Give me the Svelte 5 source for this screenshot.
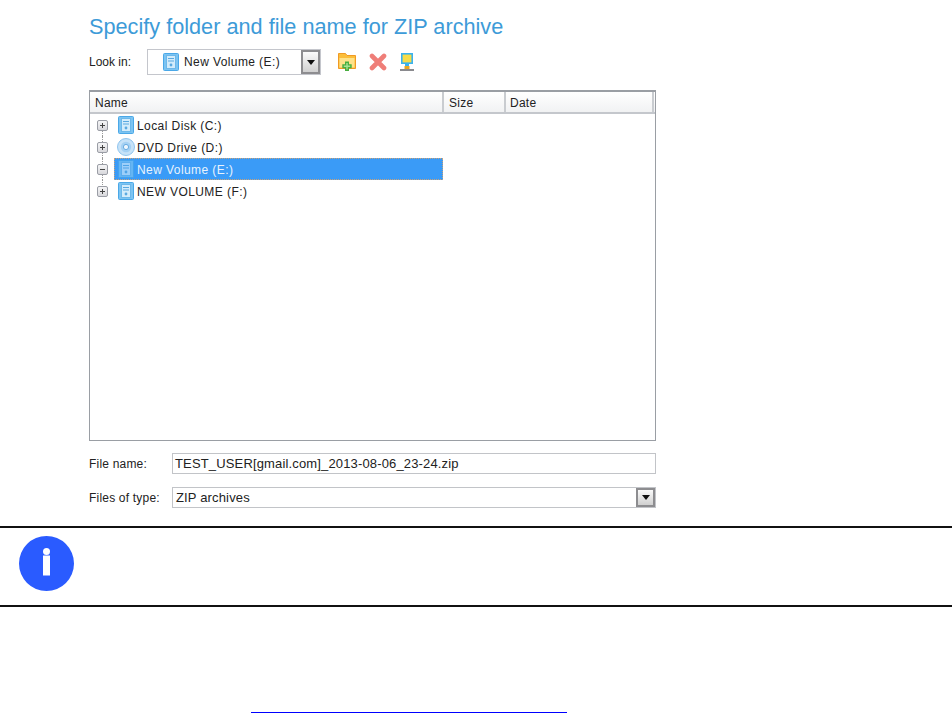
<script lang="ts">
	const drives = [
		{ label: 'Local Disk (C:)', kind: 'disk', open: false, selected: false },
		{ label: 'DVD Drive (D:)', kind: 'dvd', open: false, selected: false },
		{ label: 'New Volume (E:)', kind: 'disk', open: true, selected: true },
		{ label: 'NEW VOLUME (F:)', kind: 'disk', open: false, selected: false }
	];
</script>

{#snippet diskIcon()}
	<svg class="drive-icon" viewBox="0 0 16 18" aria-hidden="true">
		<rect x="0.5" y="0.5" width="15" height="17" rx="1" fill="#7cc4f2" stroke="#4aa8e8" />
		<rect x="3.5" y="2.5" width="9" height="13" fill="#d3ecfb" stroke="#6db8ea" />
		<path d="M5 5.5h6M5 8h6" stroke="#5aa9e0" />
		<circle cx="8" cy="12" r="1.4" fill="#5aa9e0" />
	</svg>
{/snippet}

{#snippet dvdIcon()}
	<svg class="drive-icon dvd" viewBox="0 0 18 18" aria-hidden="true">
		<circle cx="9" cy="9" r="8.5" fill="#c6e2f8" stroke="#8fc4ee" />
		<circle cx="9" cy="9" r="5.2" fill="#a5d1f3" />
		<circle cx="9" cy="9" r="2.6" fill="#eef7fe" stroke="#68abe2" />
	</svg>
{/snippet}

{#snippet comboArrow()}
	<span class="combo-arrow"><i></i></span>
{/snippet}

<main class="page">
	<section class="dialog">
		<h2 class="title">Specify folder and file name for ZIP archive</h2>

		<div class="look-row">
			<span class="look-label">Look in:</span>
			<div class="look-combo">
				<span class="look-value">
					{@render diskIcon()}
					New Volume (E:)
				</span>
				{@render comboArrow()}
			</div>
			<div class="tools">
				<svg viewBox="0 0 20 18" width="20" height="18" aria-hidden="true">
					<path d="M1.5 0.5h7l1.5 2h8.5v13h-17z" fill="#fbbe3a" stroke="#f09a24" />
					<path d="M2.5 5h15v9.5h-15z" fill="#fee28a" />
					<path d="M10 8.5v9.5M5.3 13.2h9.4" stroke="#49ad3f" stroke-width="4" />
					<path d="M10 10v6.4M6.8 13.2h6.4" stroke="#a6e394" stroke-width="1.4" />
				</svg>
				<svg viewBox="0 0 18 18" width="18" height="18" aria-hidden="true">
					<path d="M3 3l12 12M15 3L3 15" stroke="#ef7e78" stroke-width="4.6" stroke-linecap="round" />
				</svg>
				<svg viewBox="0 0 16 20" width="16" height="20" aria-hidden="true">
					<rect x="2.8" y="1.8" width="10.4" height="9.4" fill="#f6dc48" stroke="#3ab2ee" stroke-width="1.6" />
					<path d="M6 12h4v2H6z" fill="#3ab2ee" />
					<rect x="5.5" y="14" width="5" height="3" fill="#e9a51f" />
					<path d="M1 18h14" stroke="#8a8a8e" stroke-width="2" />
				</svg>
			</div>
		</div>

		<div class="tree-view">
			<div class="columns">
				<span class="col name">Name</span>
				<span class="col size">Size</span>
				<span class="col date">Date</span>
			</div>
			<ul class="tree">
				{#each drives as drive, i}
					<li class="node">
						<span class="guide" class:first={i === 0} class:last={i === drives.length - 1}></span>
						<span class="toggle" class:open={drive.open}></span>
						<span class="item-icon">
							{#if drive.kind === 'dvd'}
								{@render dvdIcon()}
							{:else}
								{@render diskIcon()}
							{/if}
						</span>
						<span class="label">{drive.label}</span>
						{#if drive.selected}
							<span class="selection">
								<span class="selection-icon">{@render diskIcon()}</span>
								<span class="selection-label">{drive.label}</span>
							</span>
						{/if}
					</li>
				{/each}
			</ul>
		</div>

		<div class="field-row name-row">
			<span class="field-label">File name:</span>
			<div class="field">TEST_USER[gmail.com]_2013-08-06_23-24.zip</div>
		</div>
		<div class="field-row type-row">
			<span class="field-label">Files of type:</span>
			<div class="field combo">
				<span class="type-value">ZIP archives</span>
				{@render comboArrow()}
			</div>
		</div>
	</section>

	<aside class="note">
		<svg class="info" viewBox="0 0 55 55" width="55" height="55" aria-hidden="true">
			<circle cx="27.5" cy="27.5" r="27.5" fill="#2a5bff" />
			<circle cx="27.5" cy="15.5" r="3.5" fill="#fff" />
			<rect x="24" y="19.5" width="7" height="20" fill="#fff" />
		</svg>
	</aside>

	<div class="link-row"><a class="link" href="#top" aria-label="link"></a></div>
</main>

<style>
	:global(body) {
		background: #fff;
	}

	.page {
		width: 952px;
		height: 713px;
		overflow: hidden;
		font-family: 'Liberation Sans', Arial, sans-serif;
		color: #222;
	}

	.dialog {
		width: 567px;
		margin-left: 89px;
		padding-top: 15px;
		font-size: 12px;
	}

	.title {
		margin: 0;
		font-size: 21.7px;
		line-height: 24px;
		font-weight: 400;
		color: #3d9bd8;
		white-space: nowrap;
	}

	.look-row {
		display: flex;
		align-items: center;
		height: 28px;
		margin-top: 9px;
	}

	.look-label {
		width: 58px;
	}

	.look-combo {
		display: flex;
		justify-content: space-between;
		width: 174px;
		height: 26px;
		box-sizing: border-box;
		border: 1px solid #c4c6cc;
	}

	.look-value {
		display: flex;
		align-items: center;
		gap: 5px;
		padding-left: 15px;
		letter-spacing: 0.4px;
	}

	.look-value .drive-icon {
		width: 16px;
		height: 18px;
	}

	.combo-arrow {
		display: flex;
		align-items: center;
		justify-content: center;
		width: 19px;
		box-sizing: border-box;
		border: 2px solid #8d8d90;
		background: linear-gradient(#fbfbfb, #d0d0d0);
	}

	.combo-arrow i {
		width: 0;
		height: 0;
		border: 4px solid transparent;
		border-top: 5px solid #111;
		border-bottom: 0;
	}

	.tools {
		display: flex;
		align-items: center;
		gap: 12px;
		margin-left: 16px;
	}

	.tools svg {
		filter: blur(0.3px);
	}

	.tree-view {
		width: 567px;
		height: 351px;
		margin-top: 14px;
		box-sizing: border-box;
		border: 1px solid #9a9ea4;
		border-top: 2px solid #9a9ea4;
	}

	.columns {
		display: grid;
		grid-template-columns: 354px 62px 148px;
		height: 22px;
		border-bottom: 2px solid #c4c7cc;
		background: linear-gradient(#fff, #f1f2f3);
		box-sizing: border-box;
		letter-spacing: 0.25px;
	}

	.col {
		display: flex;
		align-items: center;
		padding-left: 5px;
		padding-top: 1px;
		border-right: 2px solid #c9ccd0;
	}

	.col.date {
		padding-left: 4px;
	}

	.tree {
		margin: 0;
		padding: 0;
		list-style: none;
	}

	.node {
		position: relative;
		display: flex;
		align-items: center;
		height: 22px;
		padding-left: 7px;
	}

	.guide {
		position: absolute;
		left: 12px;
		top: 0;
		bottom: 0;
		border-left: 1px dotted #9a9a9a;
	}

	.guide.first {
		top: 11px;
	}

	.guide.last {
		bottom: 11px;
	}

	.toggle {
		position: relative;
		width: 9px;
		height: 9px;
		border: 1px solid #9a9da5;
		border-radius: 2px;
		background: linear-gradient(#f6f6f7, #d8d8dc);
	}

	.toggle::before,
	.toggle:not(.open)::after {
		content: '';
		position: absolute;
		background: #444;
	}

	.toggle::before {
		left: 2px;
		right: 2px;
		top: 4px;
		height: 1px;
	}

	.toggle:not(.open)::after {
		top: 2px;
		bottom: 2px;
		left: 4px;
		width: 1px;
	}

	.item-icon {
		display: flex;
		justify-content: center;
		width: 20px;
		margin-left: 8px;
	}

	.drive-icon {
		width: 16px;
		height: 18px;
		display: block;
	}

	.drive-icon.dvd {
		width: 18px;
	}

	.label {
		margin-left: 1px;
		padding-top: 1px;
		white-space: nowrap;
		letter-spacing: 0.42px;
	}

	.selection {
		position: absolute;
		left: 24px;
		top: 0;
		width: 329px;
		height: 22px;
		box-sizing: border-box;
		display: flex;
		align-items: center;
		background: #3a9bf7;
		border: 1px dotted #c9a27a;
		color: #e8f3fd;
		padding-left: 3px;
	}

	.selection-icon {
		opacity: 0.65;
	}

	.selection-label {
		margin-left: 3px;
		padding-top: 1px;
		white-space: nowrap;
		letter-spacing: 0.42px;
	}

	.field-row {
		display: flex;
		align-items: center;
	}

	.name-row {
		margin-top: 12px;
	}

	.type-row {
		margin-top: 13px;
	}

	.field-label {
		width: 83px;
		letter-spacing: 0.2px;
	}

	.field {
		width: 484px;
		height: 21px;
		box-sizing: border-box;
		border: 1px solid #c2c4c8;
		padding-left: 2px;
		font-size: 13px;
		letter-spacing: 0.15px;
		line-height: 19px;
		white-space: nowrap;
	}

	.field.combo {
		display: flex;
		justify-content: space-between;
	}

	.type-value {
		padding-left: 1px;
	}

	.note {
		height: 69px;
		margin-top: 18px;
		border-top: 2px solid #111;
		border-bottom: 2px solid #111;
		padding: 8px 0 0 19px;
	}

	.info {
		display: block;
	}

	.link-row {
		padding-left: 251px;
		margin-top: 105px;
	}

	.link {
		display: block;
		width: 316px;
		height: 2px;
		background: #0000ff;
	}
</style>
